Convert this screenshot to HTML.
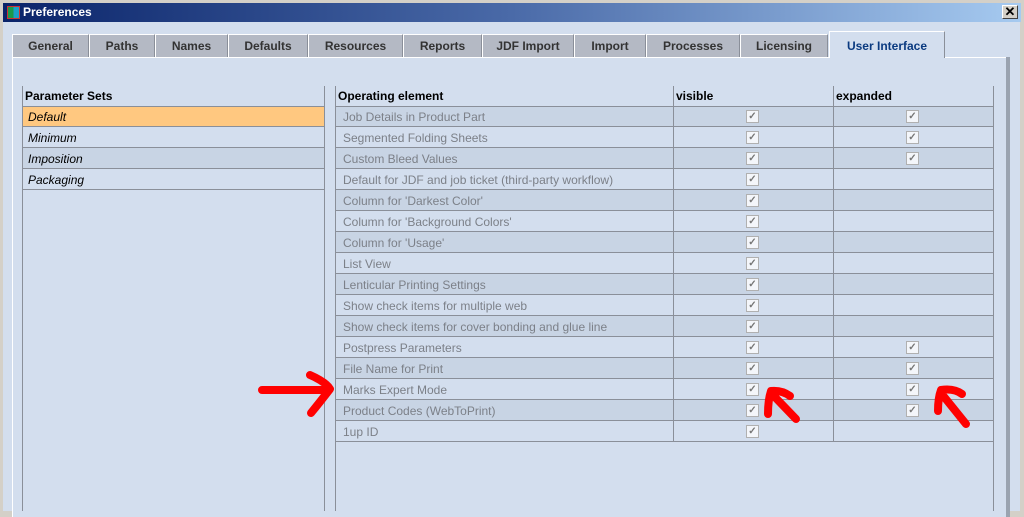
<!DOCTYPE html>
<html><head><style>
*{margin:0;padding:0;box-sizing:border-box}
body{width:1024px;height:511px;overflow:hidden;background:#d4d0c8;font-family:"Liberation Sans",sans-serif;position:relative}
.title{position:absolute;left:3px;top:3px;width:1018px;height:19px;background:linear-gradient(to right,#0a246a,#4a6aa8 50%,#a6caf0)}
.title span{position:absolute;left:20px;top:2px;color:#fff;font-weight:bold;font-size:12px}
.ico{position:absolute;left:4px;top:3px;width:13px;height:13px;border:1px solid #c33}
.xb{position:absolute;right:3px;top:2px;width:16px;height:14px;background:#d4d0c8;border:1px solid;border-color:#fff #404040 #404040 #fff;font-size:13px;line-height:11px;text-align:center;font-weight:bold}
.body{position:absolute;left:3px;top:22px;width:1017px;height:489px;background:#d3deee}
.tab{position:absolute;top:34px;height:23px;background:#b4b9c4;border:1px solid #fff;border-bottom:none;border-right-color:#8a8f99;font-size:12px;font-weight:bold;color:#333;text-align:center;line-height:22px}
.tab.sel{top:31px;height:27px;background:#d3deee;color:#0a3a80;line-height:28px;z-index:3}
.panel{position:absolute;left:12px;top:57px;width:994px;height:460px;background:#d3deee;border-top:1px solid #fff;border-left:1px solid #fff;box-shadow:4px 0 0 #9aa3b0}
.hd{position:absolute;font-size:12px;font-weight:bold;color:#000}
.row{position:absolute;height:21px;border-bottom:1px solid #8a8f99;font-size:12px;line-height:22px}
.cb{position:absolute;width:13px;height:13px;background:#f4f6fa;border:1px solid #b0b0b0;font-size:10px;color:#777;line-height:11px;text-align:center;font-weight:bold}
.vl{position:absolute;width:1px;background:#8a8f99}
</style></head><body>
<div class="title"><div class="ico" style="background:linear-gradient(to right,#1a9a4a 50%,#1aa0c8 50%)"></div><span>Preferences</span><div class="xb">✕</div></div>
<div class="body"></div>
<div class="tab" style="left:12px;width:77px">General</div>
<div class="tab" style="left:89px;width:66px">Paths</div>
<div class="tab" style="left:155px;width:73px">Names</div>
<div class="tab" style="left:228px;width:80px">Defaults</div>
<div class="tab" style="left:308px;width:95px">Resources</div>
<div class="tab" style="left:403px;width:79px">Reports</div>
<div class="tab" style="left:482px;width:92px">JDF Import</div>
<div class="tab" style="left:574px;width:72px">Import</div>
<div class="tab" style="left:646px;width:94px">Processes</div>
<div class="tab" style="left:740px;width:88px">Licensing</div>
<div class="tab sel" style="left:829px;width:116px">User Interface</div>
<div class="panel"></div>
<div class="vl" style="left:22px;top:86px;height:425px"></div>
<div class="vl" style="left:324px;top:86px;height:425px"></div>
<div class="hd" style="left:25px;top:89px">Parameter Sets</div>
<div class="row" style="left:23px;top:106px;width:301px;border-top:1px solid #8a8f99;background:#ffc880;font-style:italic;padding-left:5px;line-height:21px">Default</div>
<div class="row" style="left:23px;top:127px;width:301px;font-style:italic;padding-left:5px">Minimum</div>
<div class="row" style="left:23px;top:148px;width:301px;font-style:italic;padding-left:5px;background:#c8d4e4">Imposition</div>
<div class="row" style="left:23px;top:169px;width:301px;font-style:italic;padding-left:5px">Packaging</div>
<div class="vl" style="left:335px;top:86px;height:425px"></div>
<div class="vl" style="left:993px;top:86px;height:425px"></div>
<div class="vl" style="left:673px;top:86px;height:356px;z-index:2"></div>
<div class="vl" style="left:833px;top:86px;height:356px;z-index:2"></div>
<div class="hd" style="left:338px;top:89px">Operating element</div>
<div class="hd" style="left:676px;top:89px">visible</div>
<div class="hd" style="left:836px;top:89px">expanded</div>
<div id="rows"></div>
<script>
var r=[["Job Details in Product Part",1],["Segmented Folding Sheets",1],["Custom Bleed Values",1],["Default for JDF and job ticket (third-party workflow)",0],["Column for 'Darkest Color'",0],["Column for 'Background Colors'",0],["Column for 'Usage'",0],["List View",0],["Lenticular Printing Settings",0],["Show check items for multiple web",0],["Show check items for cover bonding and glue line",0],["Postpress Parameters",1],["File Name for Print",1],["Marks Expert Mode",1],["Product Codes (WebToPrint)",1],["1up ID",0]];
var h="";r.forEach(function(x,i){var t=106+21*i;h+='<div class="row" style="left:336px;top:'+t+'px;width:657px;color:#7c8088;padding-left:7px;'+(i==0?'border-top:1px solid #8a8f99;line-height:21px;':'')+(i%2==0?'background:#c8d4e4':'')+'">'+x[0]+'</div><div class="cb" style="left:746px;top:'+(t+4)+'px;z-index:3">✓</div>'+(x[1]?'<div class="cb" style="left:906px;top:'+(t+4)+'px;z-index:3">✓</div>':'');});
document.getElementById("rows").innerHTML=h;
</script>
<svg style="position:absolute;left:0;top:0;z-index:5" width="1024" height="511" fill="none" stroke="#f00" stroke-width="8" stroke-linecap="round" stroke-linejoin="round">
<path d="M262 390H328M310 375Q326 382 330 389Q320 402 311 413"/>
<path d="M796 419L771 393M768 414Q768 400 771 391Q782 390 790 396"/>
<path d="M966 424L941 393M938 411Q938 398 941 390Q954 388 962 394"/>
</svg>
</body></html>
